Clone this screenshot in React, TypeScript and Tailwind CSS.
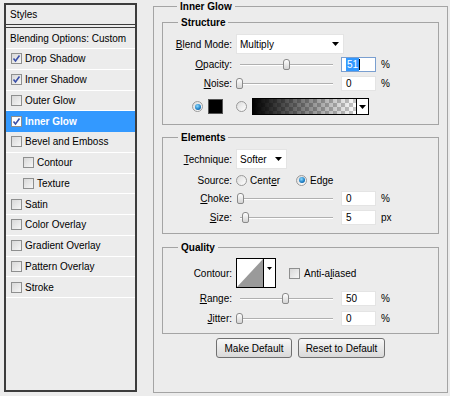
import type { ReactNode } from 'react';

const styleRows = [
  { name: 'Drop Shadow', checked: true },
  { name: 'Inner Shadow', checked: true },
  { name: 'Outer Glow' },
  { name: 'Inner Glow', checked: true, active: true },
  { name: 'Bevel and Emboss' },
  { name: 'Contour', indent: true },
  { name: 'Texture', indent: true },
  { name: 'Satin' },
  { name: 'Color Overlay' },
  { name: 'Gradient Overlay' },
  { name: 'Pattern Overlay' },
  { name: 'Stroke' },
];

function Checkbox({ checked, light }: { checked?: boolean; light?: boolean }) {
  return (
    <div
      className={`w-[11px] h-[11px] shrink-0 border border-[#8e8f8f] flex items-center justify-center ${
        light ? 'bg-white' : 'bg-gradient-to-br from-[#d8d8d8] to-[#f6f6f6]'
      }`}
    >
      {checked && (
        <svg width="9" height="9" viewBox="0 0 9 9">
          <path d="M1.5 4.5 L3.5 7 L7.5 1.5" fill="none" stroke="#3a4fa8" strokeWidth="1.6" />
        </svg>
      )}
    </div>
  );
}

function Radio({ on }: { on?: boolean }) {
  return (
    <div className="w-[11px] h-[11px] shrink-0 rounded-full border border-[#9a9a9a] bg-gradient-to-br from-[#dcdcdc] to-white flex items-center justify-center">
      {on && (
        <div className="w-[6px] h-[6px] rounded-full bg-[radial-gradient(circle_at_40%_35%,#8fdcff,#1a7cc4_60%,#0c3f72)]" />
      )}
    </div>
  );
}

function Arrow() {
  return (
    <svg width="7" height="4" viewBox="0 0 7 4" className="shrink-0">
      <polygon points="0,0 7,0 3.5,4" fill="#000" />
    </svg>
  );
}

function Label({ children }: { children: ReactNode }) {
  return <div className="w-[69px] shrink-0 text-right">{children}</div>;
}

function U({ children }: { children: ReactNode }) {
  return <span className="underline underline-offset-[1px]">{children}</span>;
}

function Slider({ pos }: { pos: number }) {
  return (
    <div className="relative w-[100px] h-[15px] shrink-0">
      <div className="absolute left-[4px] right-[3px] top-[7px] h-[2px] border-t border-[#b0b0b0] border-b border-b-white" />
      <div
        className="absolute top-[2px] w-[7px] h-[11px] rounded-t-[3px] rounded-b-[2px] border border-[#8a8a8a] bg-gradient-to-b from-white to-[#d4d4d4]"
        style={{ left: pos }}
      />
    </div>
  );
}

function SliderRow({
  label,
  pos,
  value,
  unit,
  active,
  className,
}: {
  label: ReactNode;
  pos: number;
  value: string;
  unit: string;
  active?: boolean;
  className: string;
}) {
  return (
    <div className={`flex items-center h-[15px] gap-[4px] ${className}`}>
      <Label>{label}</Label>
      <Slider pos={pos} />
      <div
        className={`ml-[1px] w-[35px] h-[15px] bg-white border flex items-center pl-[4px] ${
          active ? 'border-[#7a9fd0]' : 'border-[#e4e4e4]'
        }`}
      >
        {active ? (
          <>
            <span className="bg-[#3399ff] text-white px-[1px]">{value}</span>
            <span className="w-[1px] h-[11px] bg-black" />
          </>
        ) : (
          value
        )}
      </div>
      <span className="ml-[1px]">{unit}</span>
    </div>
  );
}

export default function App() {
  return (
    <div className="w-[450px] h-[396px] bg-[#ececec] flex overflow-hidden font-['Liberation_Sans',Arial,sans-serif] text-[10px] leading-[13px] text-black">
      {/* styles list */}
      <div className="ml-[4px] mt-[3px] w-[133px] h-[389px] border-2 border-[#3c3c3c] flex flex-col">
        <div className="h-[19px] flex items-center pl-[4px]">Styles</div>
        <div className="h-[4px] border-y border-[#3c3c3c]" />
        <div className="h-[21px] flex items-center pl-[4px] border-b border-white">Blending Options: Custom</div>
        {styleRows.map((r) => (
          <div
            key={r.name}
            className={`h-[20.75px] flex items-center gap-[3px] border-b ${r.indent ? 'pl-[17px]' : 'pl-[5px]'} ${
              r.active ? 'bg-[#3399ff] text-white font-bold border-[#3399ff]' : 'border-white'
            }`}
          >
            <Checkbox checked={r.checked} light={r.active} />
            <span>{r.name}</span>
          </div>
        ))}
      </div>

      {/* settings */}
      <fieldset className="ml-[16px] w-[295px] h-[393px] border border-[#a4a4a4] px-[8px]">
        <legend className="ml-[15px] px-[3px] font-bold">Inner Glow</legend>

        <fieldset className="mt-[3px] h-[109px] border border-[#a4a4a4]">
          <legend className="ml-[15px] px-[3px] font-bold">Structure</legend>
          <div className="mt-[5px] flex items-center h-[20px] gap-[4px]">
            <Label>
              <U>B</U>lend Mode:
            </Label>
            <div className="w-[108px] h-[20px] bg-white border border-[#e4e4e4] flex items-center justify-between pl-[3px] pr-[4px]">
              <span>Multiply</span>
              <Arrow />
            </div>
          </div>
          <SliderRow className="mt-[3px]" label={<><U>O</U>pacity:</>} pos={47} value="51" unit="%" active />
          <SliderRow className="mt-[4px]" label={<><U>N</U>oise:</>} pos={0} value="0" unit="%" />
          <div className="mt-[7px] flex items-center h-[17px] pl-[29px]">
            <Radio on />
            <div className="ml-[5px] w-[15px] h-[15px] bg-black border border-[#555]" />
            <div className="ml-[13px]">
              <Radio />
            </div>
            <div className="ml-[5px] w-[117px] h-[17px] border border-black flex">
              <div className="flex-1 bg-[conic-gradient(#c8c8c8_25%,#fff_0_50%,#c8c8c8_0_75%,#fff_0)] bg-[length:8px_8px]">
                <div className="w-full h-full bg-gradient-to-r from-black to-transparent" />
              </div>
              <div className="w-[12px] border-l border-black bg-white flex items-center justify-center">
                <Arrow />
              </div>
            </div>
          </div>
        </fieldset>

        <fieldset className="mt-[6px] h-[103px] border border-[#a4a4a4]">
          <legend className="ml-[15px] px-[3px] font-bold">Elements</legend>
          <div className="mt-[5px] flex items-center h-[20px] gap-[4px]">
            <Label>
              <U>T</U>echnique:
            </Label>
            <div className="w-[51px] h-[20px] bg-white border border-[#e4e4e4] flex items-center justify-between pl-[3px] pr-[4px]">
              <span>Softer</span>
              <Arrow />
            </div>
          </div>
          <div className="mt-[4px] flex items-center h-[14px] gap-[4px]">
            <Label>Source:</Label>
            <Radio />
            <span className="ml-[-1px]">
              Cent<U>e</U>r
            </span>
            <div className="ml-[12px]">
              <Radio on />
            </div>
            <span className="ml-[-1px]">
              Ed<U>g</U>e
            </span>
          </div>
          <SliderRow className="mt-[4px]" label={<><U>C</U>hoke:</>} pos={1} value="0" unit="%" />
          <SliderRow className="mt-[4px]" label={<><U>S</U>ize:</>} pos={6} value="5" unit="px" />
        </fieldset>

        <fieldset className="mt-[7px] h-[93px] border border-[#a4a4a4]">
          <legend className="ml-[15px] px-[3px] font-bold">Quality</legend>
          <div className="mt-[4px] flex items-center h-[30px] gap-[4px]">
            <Label>Contour:</Label>
            <div className="w-[40px] h-[30px] border border-black bg-white flex">
              <svg width="26" height="28" viewBox="0 0 26 28" className="shrink-0">
                <polygon points="0,28 26,0 26,28" fill="#9a9a9a" />
              </svg>
              <div className="flex-1 border-l border-black flex justify-center pt-[8px]">
                <svg width="5" height="3" viewBox="0 0 5 3">
                  <polygon points="0,0 5,0 2.5,3" fill="#000" />
                </svg>
              </div>
            </div>
            <div className="ml-[9px]">
              <Checkbox />
            </div>
            <span>
              Anti-a<U>l</U>iased
            </span>
          </div>
          <SliderRow className="mt-[3px]" label={<><U>R</U>ange:</>} pos={46} value="50" unit="%" />
          <SliderRow className="mt-[5px]" label={<><U>J</U>itter:</>} pos={0} value="0" unit="%" />
        </fieldset>

        <div className="mt-[4px] flex justify-center gap-[6px]">
          <button className="w-[76px] h-[20px] rounded-[3px] border border-[#707070] bg-gradient-to-b from-[#f8f8f8] to-[#d9d9d9]">
            Make Default
          </button>
          <button className="w-[87px] h-[20px] rounded-[3px] border border-[#707070] bg-gradient-to-b from-[#f8f8f8] to-[#d9d9d9]">
            Reset to Default
          </button>
        </div>
      </fieldset>
    </div>
  );
}
